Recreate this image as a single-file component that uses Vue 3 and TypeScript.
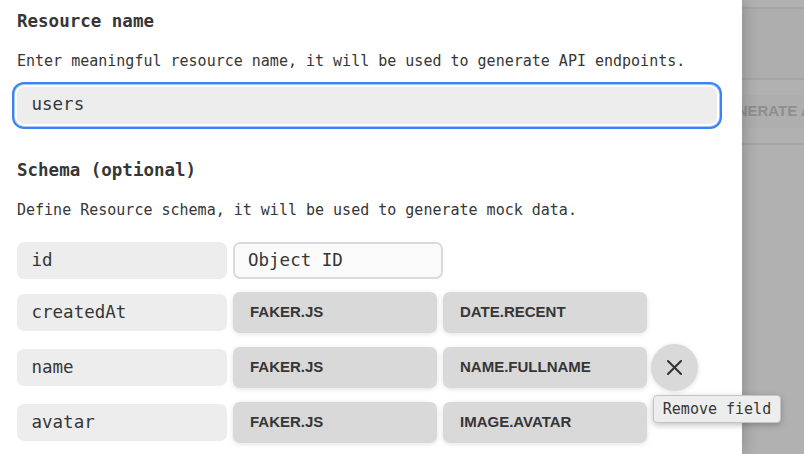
<script setup lang="ts">
import { ref } from 'vue'

interface Field {
  name: string
  source: string
  method: string
  hovered?: boolean
}

const resourceName = ref('users')
const fields = ref<Field[]>([
  { name: 'createdAt', source: 'FAKER.JS', method: 'DATE.RECENT' },
  { name: 'name', source: 'FAKER.JS', method: 'NAME.FULLNAME', hovered: true },
  { name: 'avatar', source: 'FAKER.JS', method: 'IMAGE.AVATAR' },
])
</script>

<template>
  <div class="screen">
    <div class="page">
      <div class="band band-top"></div>
      <div class="band band-hero"></div>
      <div class="band band-actions">
        <div class="generate">GENERATE ALL</div>
      </div>
    </div>

    <main class="drawer">
      <h2>Resource name</h2>
      <p>Enter meaningful resource name, it will be used to generate API endpoints.</p>
      <input v-model="resourceName" class="input focused" type="text" />

      <h2 class="schema-title">Schema (optional)</h2>
      <p class="schema-text">Define Resource schema, it will be used to generate mock data.</p>

      <div class="rows">
        <div class="row id-row">
          <input class="input key" type="text" value="id" />
          <input class="input key disabled" type="text" value="Object ID" readonly />
        </div>
        <div v-for="field in fields" :key="field.source + field.method" class="row">
          <input v-model="field.name" class="input key" type="text" />
          <button class="select" type="button">{{ field.source }}</button>
          <button class="select" type="button">{{ field.method }}</button>
          <div v-if="field.hovered" class="remove-wrap">
            <button class="remove" type="button">
              <svg width="17" height="17" viewBox="0 0 17 17">
                <path d="M2 2L15 15M15 2L2 15" />
              </svg>
            </button>
            <div class="tooltip">Remove field</div>
          </div>
        </div>
      </div>
    </main>
  </div>
</template>

<style>
body {
  overflow: hidden;
}
</style>

<style scoped>
.screen {
  position: relative;
  width: 804px;
  height: 454px;
  overflow: hidden;
  box-sizing: border-box;
  color: #363636;
  font-family: "DejaVu Sans Mono", monospace;
}
.screen *,
.screen {
  box-sizing: border-box;
}
.page {
  height: 454px;
  background: #b1b1b1;
}
.band {
  border-bottom: 2px solid #a5a5a5;
}
.band-top {
  height: 9px;
}
.band-hero {
  height: 71px;
  background: #aeaeae;
}
.band-actions {
  height: 65px;
  padding: 15px 0 0 700px;
}
.generate {
  height: 33px;
  padding-left: 15px;
  background: #aeaeae;
  color: #8e8e8e;
  font: bold 15px/31px "Liberation Sans", Arial, sans-serif;
  white-space: nowrap;
}
.drawer {
  position: absolute;
  top: 0;
  left: 0;
  width: 742px;
  height: 454px;
  padding: 11px 25px 0 17px;
  background: #fff;
  box-shadow: 0 0 16px rgba(0, 0, 0, 0.25);
}
h2 {
  margin: 0;
  font-size: 17.5px;
  line-height: 20px;
  font-weight: bold;
}
p {
  margin: 20px 0 0;
  font-size: 15px;
  line-height: 20px;
  white-space: nowrap;
}
.input {
  display: block;
  width: 100%;
  height: 37px;
  margin: 0;
  padding: 0 14.5px 2px;
  border: 0;
  border-radius: 7px;
  outline: none;
  background: #ededed;
  color: #363636;
  font-family: inherit;
  font-size: 17.5px;
}
.focused {
  margin-top: 16px;
  padding-bottom: 4px;
  box-shadow: 0 0 0 2px #fff, 0 0 0 3px #a5c6fb, 0 0 0 5px #3b82f6;
}
.schema-title {
  margin-top: 36px;
}
.rows {
  display: flex;
  flex-direction: column;
  gap: 14px;
  margin-top: 22px;
}
.row {
  display: flex;
  align-items: center;
  gap: 6px;
  height: 41px;
}
.id-row {
  height: 37px;
  margin-bottom: -1px;
}
.key {
  flex: none;
  width: 210px;
}
.disabled {
  padding: 0 13px 2px;
  border: 2px solid #dadada;
  background: #fafafa;
}
.select {
  flex: none;
  width: 204px;
  height: 41px;
  padding: 0 17px 2px;
  border: 0;
  border-radius: 7px;
  background: #d9d9d9;
  box-shadow: 0 1px 5px rgba(0, 0, 0, 0.12);
  color: #363636;
  font: bold 15px "Liberation Sans", Arial, sans-serif;
  text-align: left;
}
.remove-wrap {
  position: relative;
  flex: none;
  width: 47px;
  height: 47px;
  margin-left: -2px;
}
.remove {
  display: grid;
  place-items: center;
  width: 47px;
  height: 47px;
  padding: 0;
  border: 0;
  border-radius: 50%;
  background: #d9d9d9;
  box-shadow: 0 1px 5px rgba(0, 0, 0, 0.12);
}
.remove svg {
  display: block;
  fill: none;
  stroke: #333;
  stroke-width: 2.1;
  stroke-linecap: round;
}
.tooltip {
  position: absolute;
  z-index: 2;
  top: 51px;
  left: 2px;
  width: 128px;
  height: 28px;
  border: 1px solid #c4c4c4;
  border-radius: 4px;
  background: #ededed;
  box-shadow: 0 2px 6px rgba(0, 0, 0, 0.25);
  font-size: 15px;
  line-height: 26px;
  text-align: center;
  white-space: nowrap;
}
</style>
